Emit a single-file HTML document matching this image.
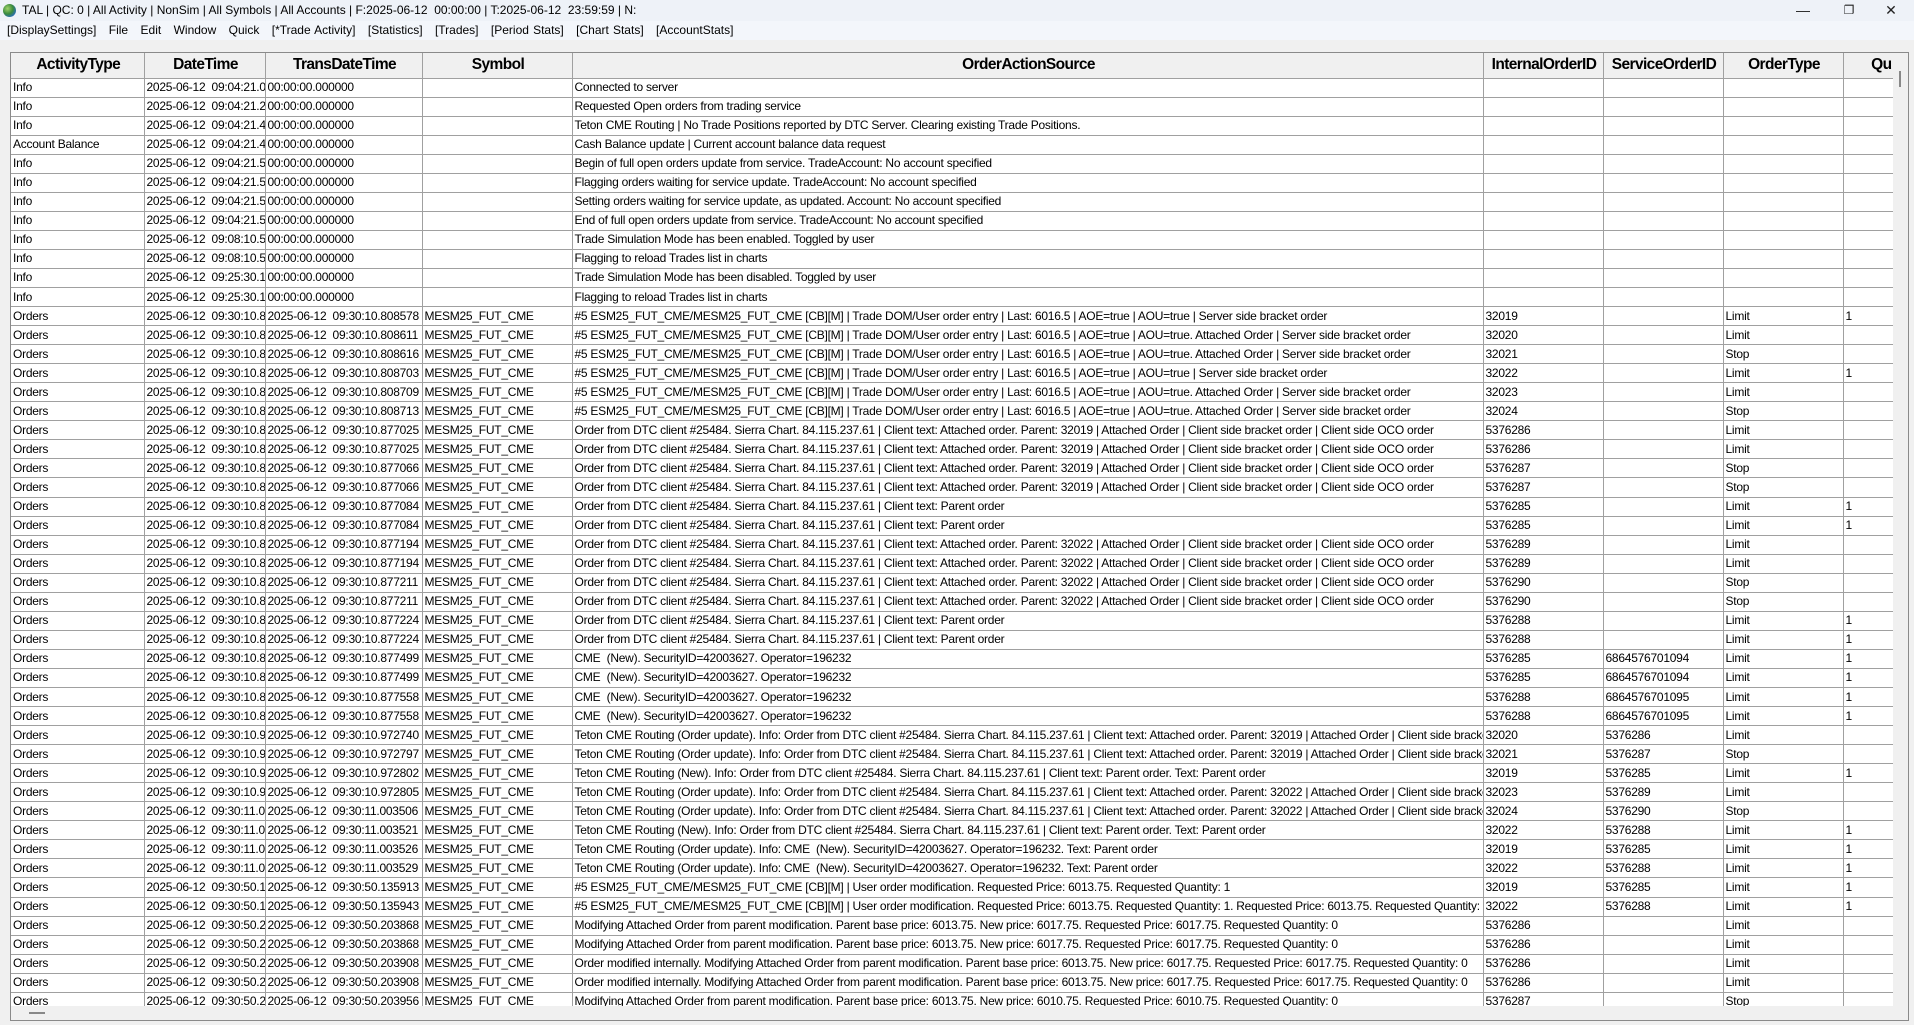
<!DOCTYPE html>
<html><head><meta charset="utf-8">
<style>
*{box-sizing:border-box;margin:0;padding:0}
body{width:1914px;height:1025px;overflow:hidden;background:#f0f0f0;font-family:"Liberation Sans",Arial,sans-serif;position:relative}
#title{position:absolute;left:0;top:0;width:1914px;height:21px;background:#eef2f8;font-size:12px;line-height:21px;padding-left:22px;color:#000;white-space:pre}
#globe{position:absolute;left:3px;top:4px;width:13px;height:13px;border-radius:50%;background:radial-gradient(circle at 35% 35%,#9fd26a,#3a8a3c 45%,#2a6fb0 75%,#1d4f86)}
#menu{position:absolute;left:0;top:21px;width:1914px;height:19px;background:#f3f6fb;font-size:12px;line-height:19px;padding-left:7px;white-space:pre;color:#000;word-spacing:0.8px}
.wc{position:absolute;top:0;height:21px;width:46px;text-align:center;font-size:14px;line-height:21px;color:#222}
#frame{position:absolute;left:10px;top:52px;width:1899px;height:969px;border:1px solid #8a8a8a;background:#f0f0f0;overflow:hidden}
#grid{position:absolute;left:0;top:0;width:1897px;height:953px;overflow:hidden;background:#f0f0f0}
table{border-collapse:collapse;table-layout:fixed;width:1882px;background:#fff}
td,th{border:1px solid #a0a0a0;overflow:hidden;white-space:pre;padding:0 0 0 2px;font-size:12px;text-align:left;color:#000;letter-spacing:-0.25px}
th{height:25px;font-size:15.5px;font-weight:bold;text-align:center;letter-spacing:-0.6px;background:#f0f0f0;border-top:none}
td{height:19.05px;line-height:17px}
tr td:first-child,tr th:first-child{border-left:none}
#vs{position:absolute;left:1882px;top:0;width:15px;height:953px;background:#f0f0f0}
#vthumb{position:absolute;left:6px;top:18px;width:2px;height:16px;background:#888}
#hthumb{position:absolute;left:18px;top:959px;width:16px;height:2px;background:#888}
</style></head><body>
<div id="title"><div id="globe"></div>TAL | QC: 0 | All Activity | NonSim | All Symbols | All Accounts | F:2025-06-12  00:00:00 | T:2025-06-12  23:59:59 | N:</div>
<div class="wc" style="left:1780px">&#8212;</div>
<div class="wc" style="left:1826px;font-size:12px">&#10064;</div>
<div class="wc" style="left:1868px">&#10005;</div>
<div id="menu">[DisplaySettings]   File   Edit   Window   Quick   [*Trade Activity]   [Statistics]   [Trades]   [Period Stats]   [Chart Stats]   [AccountStats]</div>
<div id="frame"><div id="grid">
<table>
<colgroup><col style="width:133px"><col style="width:121px"><col style="width:157px"><col style="width:150px"><col style="width:911px"><col style="width:120px"><col style="width:120px"><col style="width:120px"><col style="width:50px"></colgroup>
<tr><th>ActivityType</th><th>DateTime</th><th>TransDateTime</th><th>Symbol</th><th>OrderActionSource</th><th>InternalOrderID</th><th>ServiceOrderID</th><th>OrderType</th><th style="text-align:right;padding-right:1px">Qu</th></tr>
<tr><td>Info</td><td>2025-06-12  09:04:21.041</td><td>00:00:00.000000</td><td></td><td>Connected to server</td><td></td><td></td><td></td><td></td></tr>
<tr><td>Info</td><td>2025-06-12  09:04:21.281</td><td>00:00:00.000000</td><td></td><td>Requested Open orders from trading service</td><td></td><td></td><td></td><td></td></tr>
<tr><td>Info</td><td>2025-06-12  09:04:21.412</td><td>00:00:00.000000</td><td></td><td>Teton CME Routing | No Trade Positions reported by DTC Server. Clearing existing Trade Positions.</td><td></td><td></td><td></td><td></td></tr>
<tr><td>Account Balance</td><td>2025-06-12  09:04:21.412</td><td>00:00:00.000000</td><td></td><td>Cash Balance update | Current account balance data request</td><td></td><td></td><td></td><td></td></tr>
<tr><td>Info</td><td>2025-06-12  09:04:21.512</td><td>00:00:00.000000</td><td></td><td>Begin of full open orders update from service. TradeAccount: No account specified</td><td></td><td></td><td></td><td></td></tr>
<tr><td>Info</td><td>2025-06-12  09:04:21.512</td><td>00:00:00.000000</td><td></td><td>Flagging orders waiting for service update. TradeAccount: No account specified</td><td></td><td></td><td></td><td></td></tr>
<tr><td>Info</td><td>2025-06-12  09:04:21.512</td><td>00:00:00.000000</td><td></td><td>Setting orders waiting for service update, as updated. Account: No account specified</td><td></td><td></td><td></td><td></td></tr>
<tr><td>Info</td><td>2025-06-12  09:04:21.512</td><td>00:00:00.000000</td><td></td><td>End of full open orders update from service. TradeAccount: No account specified</td><td></td><td></td><td></td><td></td></tr>
<tr><td>Info</td><td>2025-06-12  09:08:10.512</td><td>00:00:00.000000</td><td></td><td>Trade Simulation Mode has been enabled. Toggled by user</td><td></td><td></td><td></td><td></td></tr>
<tr><td>Info</td><td>2025-06-12  09:08:10.512</td><td>00:00:00.000000</td><td></td><td>Flagging to reload Trades list in charts</td><td></td><td></td><td></td><td></td></tr>
<tr><td>Info</td><td>2025-06-12  09:25:30.112</td><td>00:00:00.000000</td><td></td><td>Trade Simulation Mode has been disabled. Toggled by user</td><td></td><td></td><td></td><td></td></tr>
<tr><td>Info</td><td>2025-06-12  09:25:30.112</td><td>00:00:00.000000</td><td></td><td>Flagging to reload Trades list in charts</td><td></td><td></td><td></td><td></td></tr>
<tr><td>Orders</td><td>2025-06-12  09:30:10.808578</td><td>2025-06-12  09:30:10.808578</td><td>MESM25_FUT_CME</td><td>#5 ESM25_FUT_CME/MESM25_FUT_CME [CB][M] | Trade DOM/User order entry | Last: 6016.5 | AOE=true | AOU=true | Server side bracket order</td><td>32019</td><td></td><td>Limit</td><td>1</td></tr>
<tr><td>Orders</td><td>2025-06-12  09:30:10.808611</td><td>2025-06-12  09:30:10.808611</td><td>MESM25_FUT_CME</td><td>#5 ESM25_FUT_CME/MESM25_FUT_CME [CB][M] | Trade DOM/User order entry | Last: 6016.5 | AOE=true | AOU=true. Attached Order | Server side bracket order</td><td>32020</td><td></td><td>Limit</td><td></td></tr>
<tr><td>Orders</td><td>2025-06-12  09:30:10.808616</td><td>2025-06-12  09:30:10.808616</td><td>MESM25_FUT_CME</td><td>#5 ESM25_FUT_CME/MESM25_FUT_CME [CB][M] | Trade DOM/User order entry | Last: 6016.5 | AOE=true | AOU=true. Attached Order | Server side bracket order</td><td>32021</td><td></td><td>Stop</td><td></td></tr>
<tr><td>Orders</td><td>2025-06-12  09:30:10.808703</td><td>2025-06-12  09:30:10.808703</td><td>MESM25_FUT_CME</td><td>#5 ESM25_FUT_CME/MESM25_FUT_CME [CB][M] | Trade DOM/User order entry | Last: 6016.5 | AOE=true | AOU=true | Server side bracket order</td><td>32022</td><td></td><td>Limit</td><td>1</td></tr>
<tr><td>Orders</td><td>2025-06-12  09:30:10.808709</td><td>2025-06-12  09:30:10.808709</td><td>MESM25_FUT_CME</td><td>#5 ESM25_FUT_CME/MESM25_FUT_CME [CB][M] | Trade DOM/User order entry | Last: 6016.5 | AOE=true | AOU=true. Attached Order | Server side bracket order</td><td>32023</td><td></td><td>Limit</td><td></td></tr>
<tr><td>Orders</td><td>2025-06-12  09:30:10.808713</td><td>2025-06-12  09:30:10.808713</td><td>MESM25_FUT_CME</td><td>#5 ESM25_FUT_CME/MESM25_FUT_CME [CB][M] | Trade DOM/User order entry | Last: 6016.5 | AOE=true | AOU=true. Attached Order | Server side bracket order</td><td>32024</td><td></td><td>Stop</td><td></td></tr>
<tr><td>Orders</td><td>2025-06-12  09:30:10.877025</td><td>2025-06-12  09:30:10.877025</td><td>MESM25_FUT_CME</td><td>Order from DTC client #25484. Sierra Chart. 84.115.237.61 | Client text: Attached order. Parent: 32019 | Attached Order | Client side bracket order | Client side OCO order</td><td>5376286</td><td></td><td>Limit</td><td></td></tr>
<tr><td>Orders</td><td>2025-06-12  09:30:10.877025</td><td>2025-06-12  09:30:10.877025</td><td>MESM25_FUT_CME</td><td>Order from DTC client #25484. Sierra Chart. 84.115.237.61 | Client text: Attached order. Parent: 32019 | Attached Order | Client side bracket order | Client side OCO order</td><td>5376286</td><td></td><td>Limit</td><td></td></tr>
<tr><td>Orders</td><td>2025-06-12  09:30:10.877066</td><td>2025-06-12  09:30:10.877066</td><td>MESM25_FUT_CME</td><td>Order from DTC client #25484. Sierra Chart. 84.115.237.61 | Client text: Attached order. Parent: 32019 | Attached Order | Client side bracket order | Client side OCO order</td><td>5376287</td><td></td><td>Stop</td><td></td></tr>
<tr><td>Orders</td><td>2025-06-12  09:30:10.877066</td><td>2025-06-12  09:30:10.877066</td><td>MESM25_FUT_CME</td><td>Order from DTC client #25484. Sierra Chart. 84.115.237.61 | Client text: Attached order. Parent: 32019 | Attached Order | Client side bracket order | Client side OCO order</td><td>5376287</td><td></td><td>Stop</td><td></td></tr>
<tr><td>Orders</td><td>2025-06-12  09:30:10.877084</td><td>2025-06-12  09:30:10.877084</td><td>MESM25_FUT_CME</td><td>Order from DTC client #25484. Sierra Chart. 84.115.237.61 | Client text: Parent order</td><td>5376285</td><td></td><td>Limit</td><td>1</td></tr>
<tr><td>Orders</td><td>2025-06-12  09:30:10.877084</td><td>2025-06-12  09:30:10.877084</td><td>MESM25_FUT_CME</td><td>Order from DTC client #25484. Sierra Chart. 84.115.237.61 | Client text: Parent order</td><td>5376285</td><td></td><td>Limit</td><td>1</td></tr>
<tr><td>Orders</td><td>2025-06-12  09:30:10.877194</td><td>2025-06-12  09:30:10.877194</td><td>MESM25_FUT_CME</td><td>Order from DTC client #25484. Sierra Chart. 84.115.237.61 | Client text: Attached order. Parent: 32022 | Attached Order | Client side bracket order | Client side OCO order</td><td>5376289</td><td></td><td>Limit</td><td></td></tr>
<tr><td>Orders</td><td>2025-06-12  09:30:10.877194</td><td>2025-06-12  09:30:10.877194</td><td>MESM25_FUT_CME</td><td>Order from DTC client #25484. Sierra Chart. 84.115.237.61 | Client text: Attached order. Parent: 32022 | Attached Order | Client side bracket order | Client side OCO order</td><td>5376289</td><td></td><td>Limit</td><td></td></tr>
<tr><td>Orders</td><td>2025-06-12  09:30:10.877211</td><td>2025-06-12  09:30:10.877211</td><td>MESM25_FUT_CME</td><td>Order from DTC client #25484. Sierra Chart. 84.115.237.61 | Client text: Attached order. Parent: 32022 | Attached Order | Client side bracket order | Client side OCO order</td><td>5376290</td><td></td><td>Stop</td><td></td></tr>
<tr><td>Orders</td><td>2025-06-12  09:30:10.877211</td><td>2025-06-12  09:30:10.877211</td><td>MESM25_FUT_CME</td><td>Order from DTC client #25484. Sierra Chart. 84.115.237.61 | Client text: Attached order. Parent: 32022 | Attached Order | Client side bracket order | Client side OCO order</td><td>5376290</td><td></td><td>Stop</td><td></td></tr>
<tr><td>Orders</td><td>2025-06-12  09:30:10.877224</td><td>2025-06-12  09:30:10.877224</td><td>MESM25_FUT_CME</td><td>Order from DTC client #25484. Sierra Chart. 84.115.237.61 | Client text: Parent order</td><td>5376288</td><td></td><td>Limit</td><td>1</td></tr>
<tr><td>Orders</td><td>2025-06-12  09:30:10.877224</td><td>2025-06-12  09:30:10.877224</td><td>MESM25_FUT_CME</td><td>Order from DTC client #25484. Sierra Chart. 84.115.237.61 | Client text: Parent order</td><td>5376288</td><td></td><td>Limit</td><td>1</td></tr>
<tr><td>Orders</td><td>2025-06-12  09:30:10.877499</td><td>2025-06-12  09:30:10.877499</td><td>MESM25_FUT_CME</td><td>CME  (New). SecurityID=42003627. Operator=196232</td><td>5376285</td><td>6864576701094</td><td>Limit</td><td>1</td></tr>
<tr><td>Orders</td><td>2025-06-12  09:30:10.877499</td><td>2025-06-12  09:30:10.877499</td><td>MESM25_FUT_CME</td><td>CME  (New). SecurityID=42003627. Operator=196232</td><td>5376285</td><td>6864576701094</td><td>Limit</td><td>1</td></tr>
<tr><td>Orders</td><td>2025-06-12  09:30:10.877558</td><td>2025-06-12  09:30:10.877558</td><td>MESM25_FUT_CME</td><td>CME  (New). SecurityID=42003627. Operator=196232</td><td>5376288</td><td>6864576701095</td><td>Limit</td><td>1</td></tr>
<tr><td>Orders</td><td>2025-06-12  09:30:10.877558</td><td>2025-06-12  09:30:10.877558</td><td>MESM25_FUT_CME</td><td>CME  (New). SecurityID=42003627. Operator=196232</td><td>5376288</td><td>6864576701095</td><td>Limit</td><td>1</td></tr>
<tr><td>Orders</td><td>2025-06-12  09:30:10.972740</td><td>2025-06-12  09:30:10.972740</td><td>MESM25_FUT_CME</td><td>Teton CME Routing (Order update). Info: Order from DTC client #25484. Sierra Chart. 84.115.237.61 | Client text: Attached order. Parent: 32019 | Attached Order | Client side bracket order</td><td>32020</td><td>5376286</td><td>Limit</td><td></td></tr>
<tr><td>Orders</td><td>2025-06-12  09:30:10.972797</td><td>2025-06-12  09:30:10.972797</td><td>MESM25_FUT_CME</td><td>Teton CME Routing (Order update). Info: Order from DTC client #25484. Sierra Chart. 84.115.237.61 | Client text: Attached order. Parent: 32019 | Attached Order | Client side bracket order</td><td>32021</td><td>5376287</td><td>Stop</td><td></td></tr>
<tr><td>Orders</td><td>2025-06-12  09:30:10.972802</td><td>2025-06-12  09:30:10.972802</td><td>MESM25_FUT_CME</td><td>Teton CME Routing (New). Info: Order from DTC client #25484. Sierra Chart. 84.115.237.61 | Client text: Parent order. Text: Parent order</td><td>32019</td><td>5376285</td><td>Limit</td><td>1</td></tr>
<tr><td>Orders</td><td>2025-06-12  09:30:10.972805</td><td>2025-06-12  09:30:10.972805</td><td>MESM25_FUT_CME</td><td>Teton CME Routing (Order update). Info: Order from DTC client #25484. Sierra Chart. 84.115.237.61 | Client text: Attached order. Parent: 32022 | Attached Order | Client side bracket order</td><td>32023</td><td>5376289</td><td>Limit</td><td></td></tr>
<tr><td>Orders</td><td>2025-06-12  09:30:11.003506</td><td>2025-06-12  09:30:11.003506</td><td>MESM25_FUT_CME</td><td>Teton CME Routing (Order update). Info: Order from DTC client #25484. Sierra Chart. 84.115.237.61 | Client text: Attached order. Parent: 32022 | Attached Order | Client side bracket order</td><td>32024</td><td>5376290</td><td>Stop</td><td></td></tr>
<tr><td>Orders</td><td>2025-06-12  09:30:11.003521</td><td>2025-06-12  09:30:11.003521</td><td>MESM25_FUT_CME</td><td>Teton CME Routing (New). Info: Order from DTC client #25484. Sierra Chart. 84.115.237.61 | Client text: Parent order. Text: Parent order</td><td>32022</td><td>5376288</td><td>Limit</td><td>1</td></tr>
<tr><td>Orders</td><td>2025-06-12  09:30:11.003526</td><td>2025-06-12  09:30:11.003526</td><td>MESM25_FUT_CME</td><td>Teton CME Routing (Order update). Info: CME  (New). SecurityID=42003627. Operator=196232. Text: Parent order</td><td>32019</td><td>5376285</td><td>Limit</td><td>1</td></tr>
<tr><td>Orders</td><td>2025-06-12  09:30:11.003529</td><td>2025-06-12  09:30:11.003529</td><td>MESM25_FUT_CME</td><td>Teton CME Routing (Order update). Info: CME  (New). SecurityID=42003627. Operator=196232. Text: Parent order</td><td>32022</td><td>5376288</td><td>Limit</td><td>1</td></tr>
<tr><td>Orders</td><td>2025-06-12  09:30:50.135913</td><td>2025-06-12  09:30:50.135913</td><td>MESM25_FUT_CME</td><td>#5 ESM25_FUT_CME/MESM25_FUT_CME [CB][M] | User order modification. Requested Price: 6013.75. Requested Quantity: 1</td><td>32019</td><td>5376285</td><td>Limit</td><td>1</td></tr>
<tr><td>Orders</td><td>2025-06-12  09:30:50.135943</td><td>2025-06-12  09:30:50.135943</td><td>MESM25_FUT_CME</td><td>#5 ESM25_FUT_CME/MESM25_FUT_CME [CB][M] | User order modification. Requested Price: 6013.75. Requested Quantity: 1. Requested Price: 6013.75. Requested Quantity: 1</td><td>32022</td><td>5376288</td><td>Limit</td><td>1</td></tr>
<tr><td>Orders</td><td>2025-06-12  09:30:50.203868</td><td>2025-06-12  09:30:50.203868</td><td>MESM25_FUT_CME</td><td>Modifying Attached Order from parent modification. Parent base price: 6013.75. New price: 6017.75. Requested Price: 6017.75. Requested Quantity: 0</td><td>5376286</td><td></td><td>Limit</td><td></td></tr>
<tr><td>Orders</td><td>2025-06-12  09:30:50.203868</td><td>2025-06-12  09:30:50.203868</td><td>MESM25_FUT_CME</td><td>Modifying Attached Order from parent modification. Parent base price: 6013.75. New price: 6017.75. Requested Price: 6017.75. Requested Quantity: 0</td><td>5376286</td><td></td><td>Limit</td><td></td></tr>
<tr><td>Orders</td><td>2025-06-12  09:30:50.203908</td><td>2025-06-12  09:30:50.203908</td><td>MESM25_FUT_CME</td><td>Order modified internally. Modifying Attached Order from parent modification. Parent base price: 6013.75. New price: 6017.75. Requested Price: 6017.75. Requested Quantity: 0</td><td>5376286</td><td></td><td>Limit</td><td></td></tr>
<tr><td>Orders</td><td>2025-06-12  09:30:50.203908</td><td>2025-06-12  09:30:50.203908</td><td>MESM25_FUT_CME</td><td>Order modified internally. Modifying Attached Order from parent modification. Parent base price: 6013.75. New price: 6017.75. Requested Price: 6017.75. Requested Quantity: 0</td><td>5376286</td><td></td><td>Limit</td><td></td></tr>
<tr><td>Orders</td><td>2025-06-12  09:30:50.203956</td><td>2025-06-12  09:30:50.203956</td><td>MESM25_FUT_CME</td><td>Modifying Attached Order from parent modification. Parent base price: 6013.75. New price: 6010.75. Requested Price: 6010.75. Requested Quantity: 0</td><td>5376287</td><td></td><td>Stop</td><td></td></tr>
</table>
<div id="vs"><div id="vthumb"></div></div>
</div>
<div id="hthumb"></div>
</div>
</body></html>
